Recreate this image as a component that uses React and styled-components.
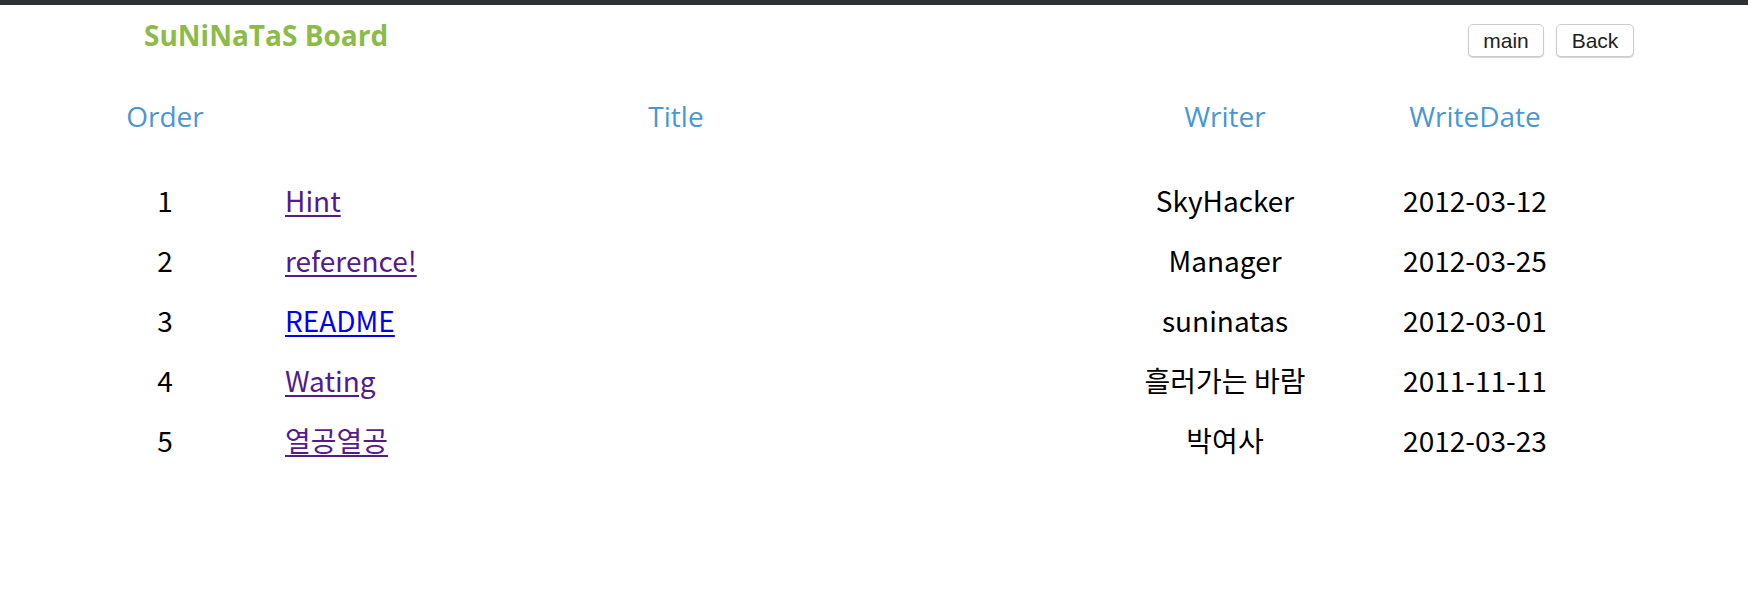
import React from 'react';
import styled, { createGlobalStyle } from 'styled-components';

const GlobalStyle = createGlobalStyle`
  html, body {
    margin: 0;
    padding: 0;
    background: #FFFFFF;
  }
`;

const TopBar = styled.div`
  height: 5px;
  background: #2F3133;
`;

const Header = styled.div`
  height: 81px;
  box-sizing: border-box;
  display: flex;
  justify-content: space-between;
  align-items: flex-start;
  padding: 10px 114px 0 144px;
`;

const BoardTitle = styled.h1`
  margin: 0;
  font-family: "Open Sans", sans-serif;
  font-size: 28px;
  font-weight: 700;
  line-height: 40px;
  color: #8CBB4A;
`;

const Buttons = styled.div`
  display: flex;
  gap: 12px;
  margin-top: 9px;
`;

const Button = styled.button`
  height: 33px;
  min-width: ${p => p.width}px;
  padding: 0 10px;
  box-sizing: border-box;
  font-family: "Liberation Sans", Arial, sans-serif;
  font-size: 21px;
  color: #222;
  background: #FFFFFF;
  border: 1px solid #CCCCCC;
  border-radius: 5px;
  box-shadow: 0 1px 1px rgba(0, 0, 0, 0.18);
  cursor: pointer;
`;

const Table = styled.div`
  margin-left: 50px;
  display: grid;
  grid-template-columns: 230px 792px 306px 194px;
`;

const HeadCell = styled.div`
  height: 60px;
  line-height: 60px;
  text-align: center;
  font-family: "Open Sans", sans-serif;
  font-size: 28px;
  color: #4A97D1;
  margin-bottom: 24px;
`;

const Cell = styled.div`
  height: 60px;
  line-height: 60px;
  text-align: ${p => (p.left ? 'left' : 'center')};
  padding-left: ${p => (p.left ? '5px' : '0')};
  font-family: "Noto Sans CJK KR", sans-serif;
  font-size: 28px;
  color: #000;
  white-space: nowrap;
`;

const Link = styled.a`
  color: ${p => (p.visited ? '#551A8B' : '#0000EE')};
  text-decoration: underline;
  text-decoration-thickness: 2px;
  text-underline-offset: 3px;
`;

const posts = [
  { id: 1, title: 'Hint', writer: 'SkyHacker', date: '2012-03-12', visited: true },
  { id: 2, title: 'reference!', writer: 'Manager', date: '2012-03-25', visited: true },
  { id: 3, title: 'README', writer: 'suninatas', date: '2012-03-01', visited: false },
  { id: 4, title: 'Wating', writer: '흘러가는 바람', date: '2011-11-11', visited: true },
  { id: 5, title: '열공열공', writer: '박여사', date: '2012-03-23', visited: true },
];

export default function App() {
  return (
    <>
      <GlobalStyle />
      <TopBar />
      <Header>
        <BoardTitle>SuNiNaTaS Board</BoardTitle>
        <Buttons>
          <Button width={76}>main</Button>
          <Button width={78}>Back</Button>
        </Buttons>
      </Header>
      <Table>
        <HeadCell>Order</HeadCell>
        <HeadCell>Title</HeadCell>
        <HeadCell>Writer</HeadCell>
        <HeadCell>WriteDate</HeadCell>
        {posts.map(post => (
          <React.Fragment key={post.id}>
            <Cell>{post.id}</Cell>
            <Cell left>
              <Link href="#" visited={post.visited ? 1 : 0}>{post.title}</Link>
            </Cell>
            <Cell>{post.writer}</Cell>
            <Cell>{post.date}</Cell>
          </React.Fragment>
        ))}
      </Table>
    </>
  );
}
